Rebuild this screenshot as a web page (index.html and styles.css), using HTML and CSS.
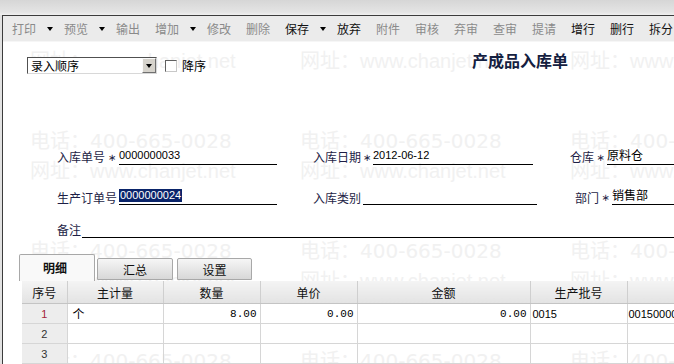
FILE: index.html
```html
<!DOCTYPE html>
<html lang="zh-CN">
<head>
  <meta charset="UTF-8">
  <title>产成品入库单</title>
  <link rel="stylesheet" href="styles.css">
</head>
<body>
  <div class="topstrip"></div>

  <div class="frame">
    <!-- faint watermark behind the form -->
    <div class="watermark">
      <div class="wm-pair first">
        <div class="wm-line web"><span>网址：www.chanjet.net</span><span>网址：www.chanjet.net</span><span>网址：www.chanjet.net</span></div>
      </div>
      <div class="wm-pair">
        <div class="wm-line tel"><span>电话：400-665-0028</span><span>电话：400-665-0028</span><span>电话：400-665-0028</span></div>
        <div class="wm-line web"><span>网址：www.chanjet.net</span><span>网址：www.chanjet.net</span><span>网址：www.chanjet.net</span></div>
      </div>
      <div class="wm-pair">
        <div class="wm-line tel"><span>电话：400-665-0028</span><span>电话：400-665-0028</span><span>电话：400-665-0028</span></div>
        <div class="wm-line web"><span>网址：www.chanjet.net</span><span>网址：www.chanjet.net</span><span>网址：www.chanjet.net</span></div>
      </div>
      <div class="wm-pair">
        <div class="wm-line tel"><span>电话：400-665-0028</span><span>电话：400-665-0028</span><span>电话：400-665-0028</span></div>
      </div>
    </div>

    <div class="toolbar">
      <span class="tb-btn drop off">打印<i class="caret"></i></span>
      <span class="tb-btn drop off">预览<i class="caret"></i></span>
      <span class="tb-btn off">输出</span>
      <span class="tb-btn drop off">增加<i class="caret"></i></span>
      <span class="tb-btn off">修改</span>
      <span class="tb-btn off">删除</span>
      <span class="tb-btn drop">保存<i class="caret"></i></span>
      <span class="tb-btn">放弃</span>
      <span class="tb-btn off">附件</span>
      <span class="tb-btn off">审核</span>
      <span class="tb-btn off">弃审</span>
      <span class="tb-btn off">查审</span>
      <span class="tb-btn off">提请</span>
      <span class="tb-btn">增行</span>
      <span class="tb-btn">删行</span>
      <span class="tb-btn">拆分</span>
    </div>

    <div class="head">
      <div class="sort">
        <div class="select">
          <span class="select-text">录入顺序</span>
          <span class="select-btn"><i class="caret"></i></span>
        </div>
        <span class="check"></span>
        <span class="check-label">降序</span>
      </div>
      <div class="title">产成品入库单</div>
    </div>

    <div class="form">
      <div class="row row1">
        <div class="field">
          <span class="label w48">入库单号</span><span class="star s14">∗</span>
          <span class="line w158">0000000033</span>
        </div>
        <div class="field c2">
          <span class="label w48">入库日期</span><span class="star s12">∗</span>
          <span class="line w160">2012-06-12</span>
        </div>
        <div class="field c3">
          <span class="label w24">仓库</span><span class="star s13">∗</span>
          <span class="line grow cjk">原料仓</span>
        </div>
      </div>

      <div class="row row2">
        <div class="field">
          <span class="label w60 low">生产订单号</span><span class="star s2"></span>
          <span class="line w158"><span class="selected">0000000024</span></span>
        </div>
        <div class="field c2">
          <span class="label w48 low">入库类别</span><span class="star s2"></span>
          <span class="line w174"></span>
        </div>
        <div class="field c3b">
          <span class="label w24 low">部门</span><span class="star s13">∗</span>
          <span class="line grow cjk">销售部</span>
        </div>
      </div>

      <div class="row row3">
        <div class="field grow">
          <span class="label w24">备注</span><span class="star s1"></span>
          <span class="line grow"></span>
        </div>
      </div>
    </div>

    <div class="tabs">
      <span class="tab active">明细</span>
      <span class="tab">汇总</span>
      <span class="tab tab3">设置</span>
    </div>

    <table class="grid">
      <colgroup>
        <col class="c-no"><col class="c-unit"><col class="c-qty"><col class="c-price"><col class="c-amt"><col class="c-batch"><col class="c-more">
      </colgroup>
      <thead>
        <tr><th>序号</th><th>主计量</th><th>数量</th><th>单价</th><th>金额</th><th>生产批号</th><th></th></tr>
      </thead>
      <tbody>
        <tr>
          <td class="no current">1</td>
          <td class="txt">个</td>
          <td class="num">8.00</td>
          <td class="num">0.00</td>
          <td class="num">0.00</td>
          <td class="code">0015</td>
          <td class="code edit">00150000</td>
        </tr>
        <tr><td class="no">2</td><td></td><td></td><td></td><td></td><td></td><td></td></tr>
        <tr><td class="no">3</td><td></td><td></td><td></td><td></td><td></td><td></td></tr>
      </tbody>
    </table>
  </div>
</body>
</html>
```

FILE: styles.css
```css
body {
  margin: 0;
  width: 674px;
  height: 364px;
  overflow: hidden;
  background: #e2e2e2;
  font-family: "Noto Sans CJK SC", "Liberation Sans", sans-serif;
  font-size: 12px;
  color: #000;
}

.topstrip {
  height: 15px;
  background: linear-gradient(#d6d6d6, #e4e4e4 80%, #f0f0f0);
}

.frame {
  position: relative;
  margin-left: 2px;
  height: 348px;
  border-left: 1px solid #3c3c3c;
  border-top: 1px solid #3c3c3c;
  background: #fff;
  overflow: hidden;
}

/* watermark */
.watermark {
  position: absolute;
  top: 30px;
  left: 27px;
  z-index: 0;
  pointer-events: none;
  color: #f1f1f1;
  font-size: 20px;
}

.wm-pair {
  margin-bottom: 50px;
}

.wm-line {
  display: flex;
  height: 30px;
  line-height: 30px;
  white-space: nowrap;
}

.wm-line span {
  width: 270px;
  flex: none;
}

.wm-line.tel {
  font-family: "DejaVu Sans", "Noto Sans CJK SC", sans-serif;
}

.wm-line.web {
  font-family: "Liberation Sans", "Noto Sans CJK SC", sans-serif;
}

.toolbar, .head, .form, .tabs, .grid {
  position: relative;
  z-index: 1;
}

/* toolbar */
.toolbar {
  display: flex;
  align-items: center;
  height: 25px;
  padding-left: 9px;
  background: #ebebeb;
  border-bottom: 1px solid #f6f6f6;
  font-size: 12px;
  line-height: 16px;
  color: #111;
  white-space: nowrap;
}

.tb-btn {
  flex: none;
  width: 39px;
  display: flex;
  align-items: center;
}

.tb-btn.drop {
  width: 52px;
}

.tb-btn.off {
  color: #8a8a8a;
}

.caret {
  display: inline-block;
  width: 0;
  height: 0;
  border-left: 3px solid transparent;
  border-right: 3px solid transparent;
  border-top: 4px solid #000;
}

.tb-btn .caret {
  margin-left: 11px;
}

/* sort + title */
.head {
  display: flex;
  align-items: flex-start;
  padding: 8px 0 0 24px;
}

.sort {
  display: flex;
  align-items: center;
  margin-top: 7px;
}

.select {
  display: flex;
  align-items: center;
  justify-content: space-between;
  box-sizing: border-box;
  width: 130px;
  height: 17px;
  border: 1px solid;
  border-color: #505050 #d8d8d8 #d8d8d8 #505050;
  background: #fff;
}

.select-text {
  padding-left: 3px;
  line-height: 15px;
}

.select-btn {
  display: flex;
  align-items: center;
  justify-content: center;
  box-sizing: border-box;
  width: 14px;
  height: 15px;
  background: #d6d3cc;
  border: 1px solid;
  border-color: #fafafa #707070 #707070 #fafafa;
}

.check {
  box-sizing: border-box;
  width: 12px;
  height: 12px;
  margin-left: 8px;
  border: 1px solid;
  border-color: #606060 #c8c8c8 #c8c8c8 #606060;
  background: #fff;
}

.check-label {
  margin-left: 5px;
  line-height: 16px;
}

.title {
  margin-left: 266px;
  font-size: 16px;
  line-height: 20px;
  font-weight: bold;
  color: #142040;
}

/* header form */
.form {
  margin-top: 75px;
  padding-left: 54px;
}

.row {
  display: flex;
  height: 16px;
}

.row2 {
  margin-top: 24px;
}

.row3 {
  margin-top: 17px;
}

.field {
  display: flex;
  flex: none;
}

.field.grow, .line.grow {
  flex: 1;
}

.c2 { margin-left: 36px; }
.c3 { margin-left: 37px; flex: 1; }
.c3b { margin-left: 38px; flex: 1; }

.label {
  flex: none;
  line-height: 16px;
  color: #1e1e46;
  white-space: nowrap;
}

.label.low {
  padding-top: 1px;
}

.w24 { width: 24px; }
.w48 { width: 48px; }
.w60 { width: 60px; }

.star {
  flex: none;
  font-family: "DejaVu Sans", sans-serif;
  font-size: 10px;
  line-height: 18px;
  text-align: center;
  color: #1e1e46;
}

.s1 { width: 1px; }
.s2 { width: 2px; }
.s12 { width: 12px; }
.s13 { width: 13px; }
.s14 { width: 14px; }

.line {
  flex: none;
  box-sizing: border-box;
  height: 16px;
  border-bottom: 1px solid #000;
  font-family: "Liberation Sans", sans-serif;
  font-size: 11px;
  line-height: 12px;
  white-space: nowrap;
}

.line.cjk {
  font-family: "Noto Sans CJK SC", sans-serif;
  font-size: 12px;
}

.w158 { width: 158px; }
.w160 { width: 160px; }
.w174 { width: 174px; }

.selected {
  display: inline-block;
  padding: 0 1px;
  line-height: 13px;
  background: #0a246a;
  color: #fff;
}

/* tabs */
.tabs {
  display: flex;
  align-items: flex-end;
  height: 27px;
  margin-top: 16px;
  padding-left: 16px;
}

.tab {
  box-sizing: border-box;
  width: 76px;
  height: 22px;
  margin-left: 2px;
  margin-bottom: 1px;
  border: 1px solid #a8a8a8;
  border-radius: 2px 2px 0 0;
  background: linear-gradient(#f6f6f6, #d8d8d8);
  text-align: center;
  line-height: 22px;
  color: #111;
}

.tab.active {
  height: 27px;
  margin-left: 0;
  margin-bottom: 0;
  border-bottom: none;
  background: #f9f9f9;
  font-weight: bold;
  line-height: 26px;
  text-align: left;
  padding-left: 23px;
}

.tab.tab3 {
  width: 75px;
  margin-left: 4px;
}

/* detail grid */
.grid {
  margin-left: 19px;
  border-collapse: collapse;
  table-layout: fixed;
  width: 725px;
}

.c-no { width: 45px; }
.c-unit { width: 96px; }
.c-qty { width: 97px; }
.c-price { width: 97px; }
.c-amt { width: 173px; }
.c-batch { width: 97px; }
.c-more { width: 120px; }

.grid th {
  height: 20px;
  padding: 2px 0 0;
  border-right: 1px solid #cfcfcf;
  border-bottom: 1px solid #c4c4c4;
  background: linear-gradient(#f4f4f4, #e3e3e3);
  font-weight: normal;
  line-height: 16px;
  color: #111;
}

.grid td {
  height: 19px;
  padding: 0;
  border-right: 1px solid #d6d6d6;
  border-bottom: 1px solid #d6d6d6;
  line-height: 16px;
  white-space: nowrap;
  overflow: hidden;
}

.grid td.no {
  background: #ededed;
  text-align: center;
  font-family: "Liberation Sans", sans-serif;
  font-size: 11px;
  color: #333;
}

.grid td.current {
  color: #a3243b;
}

.grid td.txt {
  padding-left: 5px;
}

.grid td.num {
  text-align: right;
  padding-right: 3px;
  font-family: "Liberation Mono", monospace;
  font-size: 11px;
}

.grid td.code {
  padding-left: 2px;
  font-family: "Liberation Sans", sans-serif;
  font-size: 11px;
}

.grid td.edit {
  padding-left: 1px;
}
```
